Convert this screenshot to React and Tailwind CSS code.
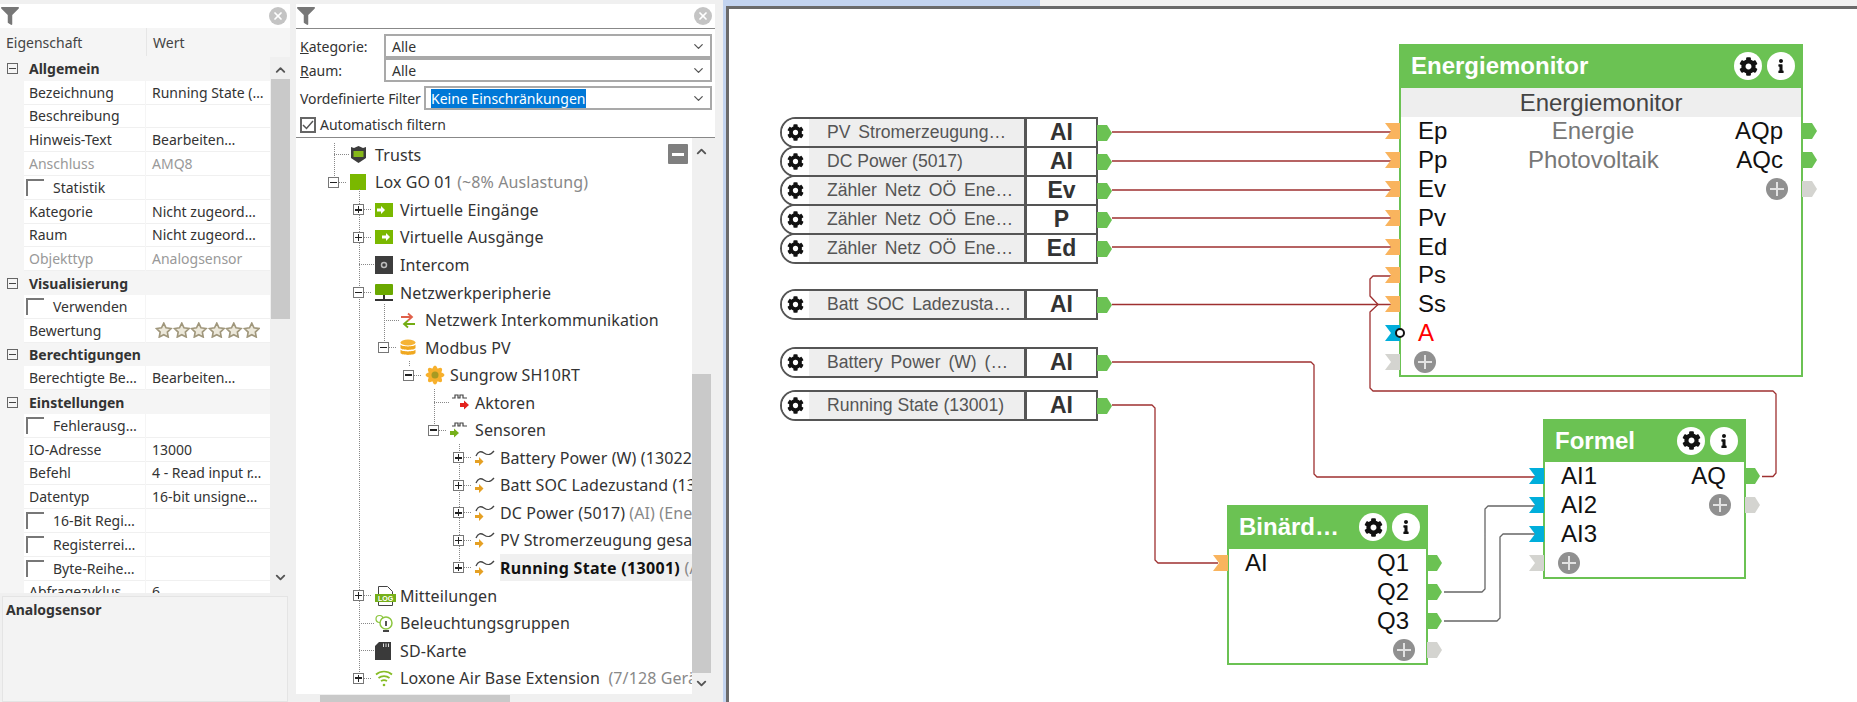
import React from 'react';
import { ChevronDown, ChevronUp, X } from 'lucide-react';
import { FaCog, FaFilter, FaInfo } from 'react-icons/fa';

const Star = () => (
  <svg width="17.500" height="16" viewBox="0 0 18 16" className="shrink-0">
    <path d="M9 1l2.300 4.800 5.200.7-3.800 3.600.9 5.100L9 12.800 4.400 15.200l.9-5.100L1.500 6.500l5.200-.7z" fill="#ece8da" stroke="#a0977c" strokeWidth="1.700" />
  </svg>
);

const propertyRows = [
  { group: 'Allgemein' },
  { name: 'Bezeichnung', value: 'Running State (…' },
  { name: 'Beschreibung' },
  { name: 'Hinweis-Text', value: 'Bearbeiten…' },
  { name: 'Anschluss', value: 'AMQ8', muted: true },
  { name: 'Statistik', check: true },
  { name: 'Kategorie', value: 'Nicht zugeord…' },
  { name: 'Raum', value: 'Nicht zugeord…' },
  { name: 'Objekttyp', value: 'Analogsensor', muted: true },
  { group: 'Visualisierung' },
  { name: 'Verwenden', check: true },
  { name: 'Bewertung', stars: true },
  { group: 'Berechtigungen' },
  { name: 'Berechtigte Be…', value: 'Bearbeiten…' },
  { group: 'Einstellungen' },
  { name: 'Fehlerausg…', check: true },
  { name: 'IO-Adresse', value: '13000' },
  { name: 'Befehl', value: '4 - Read input r…' },
  { name: 'Datentyp', value: '16-bit unsigne…' },
  { name: '16-Bit Regi…', check: true },
  { name: 'Registerrei…', check: true },
  { name: 'Byte-Reihe…', check: true },
  { name: 'Abfragezyklus', value: '6' },
];

const PropertyRow = ({ row }) => {
  if (row.group) {
    return (
      <div className="h-[23.800px] flex items-center bg-[#f5f5f5] shrink-0">
        <span className="ml-[7px] w-[11px] h-[11px] border border-[#666] flex items-center justify-center">
          <span className="w-[7px] h-px bg-[#444]" />
        </span>
        <span className="ml-[11px] font-bold text-[#333]">{row.group}</span>
      </div>
    );
  }
  const tone = row.muted ? 'text-[#999]' : 'text-[#333]';
  return (
    <div className="h-[23.800px] flex bg-[#f5f5f5] shrink-0">
      <div className="ml-[24px] w-[121px] bg-white border-b border-[#f0f0f0] flex items-center overflow-hidden whitespace-nowrap">
        {row.check ? (
          <>
            <span className="ml-[2px] w-[18px] h-[17px] border-l-2 border-t-2 border-[#777]" />
            <span className={`ml-[9px] ${tone}`}>{row.name}</span>
          </>
        ) : (
          <span className={`ml-[5px] ${tone}`}>{row.name}</span>
        )}
      </div>
      <div className="ml-px w-[124px] bg-white border-b border-[#f0f0f0] flex items-center overflow-hidden whitespace-nowrap">
        {row.stars ? (
          <span className="ml-[9px] flex">
            {[0, 1, 2, 3, 4, 5].map((i) => <Star key={i} />)}
          </span>
        ) : (
          <span className={`ml-[6px] ${tone}`}>{row.value}</span>
        )}
      </div>
    </div>
  );
};

const FilterBar = () => (
  <div className="h-[25px] bg-white border-b border-[#888] flex items-center justify-between pl-[1px] pr-[3px] shrink-0">
    <FaFilter size={18} color="#777" />
    <span className="w-[18px] h-[18px] rounded-full bg-[#c4c4c4] flex items-center justify-center">
      <X size={12} color="#fff" strokeWidth={3.500} />
    </span>
  </div>
);

const PropertyPanel = () => (
  <div className="w-[290px] shrink-0 pt-[4px] flex flex-col text-[14px] [font-family:'Noto_Sans',sans-serif]">
    <FilterBar />
    <div className="h-[29px] bg-[#f5f5f5] flex items-center text-[#444] -mt-px pb-[1px] shrink-0">
      <span className="w-[147px] pl-[6px] border-r border-[#e6e6e6] h-full flex items-center">Eigenschaft</span>
      <span className="pl-[6px]">Wert</span>
    </div>
    <div className="h-[536px] flex overflow-hidden shrink-0">
      <div className="w-[270px] flex flex-col overflow-hidden">
        {propertyRows.map((row) => <PropertyRow key={row.group || row.name} row={row} />)}
      </div>
      <div className="w-[20px] bg-[#f0f0f0] flex flex-col items-center">
        <ChevronUp size={15} strokeWidth={3} color="#555" className="mt-[4px] h-[18px]" />
        <div className="w-[19px] h-[240px] bg-[#c9c9c9]" />
        <div className="flex-1" />
        <ChevronDown size={15} strokeWidth={3} color="#555" className="mb-[8px]" />
      </div>
    </div>
    <div className="flex-1 mt-[3px] mx-[2px] bg-[#f3f3f3] border border-[#e4e4e4] px-[3px] pt-[2px]">
      <span className="font-bold text-[#333]">Analogsensor</span>
    </div>
  </div>
);

const TreeIcon = ({ type }) => {
  if (type === 'shield') return (
    <svg width="17" height="19" viewBox="0 0 17 19"><path d="M1 2l3 1 4.500-2 4.500 2 3-1v11l-7.500 5L1 13z" fill="#3c3c3c" /><rect x="3.500" y="6" width="10" height="6" fill="#86b81a" /></svg>
  );
  if (type === 'mini') return <span className="block w-[16px] h-[16px] bg-[#7ab800]" />;
  if (type === 'in' || type === 'out') return (
    <svg width="18" height="14" viewBox="0 0 18 14"><rect width="18" height="14" fill="#7ab800" /><path d={type === 'in' ? 'M2 5.500h4V3l4 4-4 4V8.500H2z' : 'M7 5.500h4V3l4 4-4 4V8.500H7z'} fill="#fff" /></svg>
  );
  if (type === 'intercom') return (
    <svg width="18" height="18" viewBox="0 0 18 18"><rect width="18" height="18" fill="#3d3d3d" /><circle cx="9" cy="9" r="2.500" fill="none" stroke="#bbb" strokeWidth="1.500" /></svg>
  );
  if (type === 'network') return (
    <svg width="18" height="18" viewBox="0 0 18 18"><rect y="0" width="18" height="11" rx="1" fill="#6aa800" /><rect x="8" y="11" width="2" height="4" fill="#333" /><rect y="15" width="18" height="2" fill="#333" /></svg>
  );
  if (type === 'arrows') return (
    <svg width="16" height="17" viewBox="0 0 16 17"><path d="M1 5h10M8 1.500L12 5 8 8.500" fill="none" stroke="#e0604a" strokeWidth="1.800" /><path d="M15 12H5M8 8.500L4 12l4 3.500" fill="none" stroke="#74ad14" strokeWidth="1.800" /></svg>
  );
  if (type === 'db') return (
    <svg width="16" height="17" viewBox="0 0 16 17"><ellipse cx="8" cy="3.500" rx="7.500" ry="3" fill="#f5b335" /><path d="M.5 5.500c1 2.500 14 2.500 15 0V9c-1 2.500-14 2.500-15 0zM.5 10.500c1 2.500 14 2.500 15 0V14c-1 2.500-14 2.500-15 0z" fill="#f0a820" /></svg>
  );
  if (type === 'sun') return (
    <svg width="20" height="20" viewBox="0 0 20 20">
      {[0, 45, 90, 135].map((a) => <ellipse key={a} cx="10" cy="10" rx="3.500" ry="9.500" fill="#f7b02c" transform={`rotate(${a} 10 10)`} />)}
      <circle cx="10" cy="10" r="3.500" fill="#a89a22" />
    </svg>
  );
  if (type === 'actor' || type === 'sensor') return (
    <svg width="19" height="17" viewBox="0 0 19 17">
      <path d="M2 4h3V1h3v3h2V1h3v3h4" fill="none" stroke="#444" strokeWidth="1.200" />
      {type === 'actor'
        ? <path d="M10 9h4V6.500l5 4.500-5 4.500V13h-4z" fill="#e3211c" />
        : <path d="M0 9h4V6.500l5 4.500-5 4.500V13H0z" fill="#76b01a" />}
    </svg>
  );
  if (type === 'wave') return (
    <svg width="20" height="18" viewBox="0 0 20 18">
      <path d="M1 7c2-5 5-5 8-3s6 3 10-2" fill="none" stroke="#444" strokeWidth="1.300" />
      <path d="M0 11h4V8l4.500 4.500L4 17v-3H0z" fill="#e5a024" />
    </svg>
  );
  if (type === 'log') return (
    <svg width="21" height="20" viewBox="0 0 21 20">
      <path d="M3.500.5h9l5 5v14h-14z" fill="#fff" stroke="#444" />
      <rect y="8" width="21" height="8" fill="#76b01a" />
      <text x="10.500" y="14.500" textAnchor="middle" fontSize="7" fontWeight="700" fill="#fff" fontFamily="Liberation Sans">LOG</text>
    </svg>
  );
  if (type === 'light') return (
    <svg width="19" height="19" viewBox="0 0 19 19">
      <circle cx="4.500" cy="5" r="3.500" fill="none" stroke="#8cc63f" strokeWidth="1.200" />
      <circle cx="11" cy="9" r="6" fill="#fff" stroke="#8cc63f" strokeWidth="1.500" />
      <rect x="8" y="16" width="6" height="2" fill="#444" />
      <rect x="10" y="7" width="2" height="5" fill="#555" />
    </svg>
  );
  if (type === 'sd') return (
    <svg width="16" height="18" viewBox="0 0 16 18"><path d="M4 0h12v18H0V4z" fill="#3a3a3a" /><path d="M8 1.500h1V5H8zM10.500 1.500h1V5h-1zM13 1.500h1V5h-1z" fill="#ddd" /></svg>
  );
  if (type === 'wifi') return (
    <svg width="18" height="18" viewBox="0 0 18 18" fill="none" stroke="#86bc25" strokeWidth="1.700">
      <path d="M1 5.500c4.500-4 11.500-4 16 0M3.500 9c3-2.500 8-2.500 11 0M6 12c2-1.300 4-1.300 6 0" />
      <circle cx="9" cy="16" r="1.300" fill="#86bc25" stroke="none" />
    </svg>
  );
  return null;
};

const treeIndent = ['pl-[29px]', 'pl-[54px]', 'pl-[79px]', 'pl-[104px]', 'pl-[129px]', 'pl-[154px]'];

const treeRows = [
  { level: 0, icon: 'shield', text: 'Trusts' },
  { level: 0, icon: 'mini', text: 'Lox GO 01', note: ' (~8% Auslastung)', box: '-' },
  { level: 1, icon: 'in', text: 'Virtuelle Eingänge', box: '+' },
  { level: 1, icon: 'out', text: 'Virtuelle Ausgänge', box: '+' },
  { level: 1, icon: 'intercom', text: 'Intercom' },
  { level: 1, icon: 'network', text: 'Netzwerkperipherie', box: '-' },
  { level: 2, icon: 'arrows', text: 'Netzwerk Interkommunikation' },
  { level: 2, icon: 'db', text: 'Modbus PV', box: '-' },
  { level: 3, icon: 'sun', text: 'Sungrow SH10RT', box: '-' },
  { level: 4, icon: 'actor', text: 'Aktoren' },
  { level: 4, icon: 'sensor', text: 'Sensoren', box: '-' },
  { level: 5, icon: 'wave', text: 'Battery Power (W) (13022) (AI)', box: '+' },
  { level: 5, icon: 'wave', text: 'Batt SOC Ladezustand (13022) (AI)', box: '+' },
  { level: 5, icon: 'wave', text: 'DC Power (5017)', note: ' (AI) (Energiemonitor)', box: '+' },
  { level: 5, icon: 'wave', text: 'PV Stromerzeugung gesamt (5017)', box: '+' },
  { level: 5, icon: 'wave', text: 'Running State (13001)', note: ' (AI)', box: '+', selected: true },
  { level: 1, icon: 'log', text: 'Mitteilungen', box: '+' },
  { level: 1, icon: 'light', text: 'Beleuchtungsgruppen' },
  { level: 1, icon: 'sd', text: 'SD-Karte' },
  { level: 1, icon: 'wifi', text: 'Loxone Air Base Extension', note: '  (7/128 Geräte)', box: '+' },
];

const TreeRow = ({ row }) => (
  <div className={`h-[27.550px] shrink-0 flex items-center whitespace-nowrap ${treeIndent[row.level]}`}>
    <span className="w-[25px] shrink-0 flex items-center">
      {row.box ? (
        <>
          <span className="ml-[3px] w-[11px] h-[11px] border border-[#777] bg-white flex items-center justify-center text-[13px] leading-none relative">
            <span className="w-[7px] h-[1.500px] bg-[#222]" />
            {row.box === '+' && <span className="absolute w-[1.500px] h-[7px] bg-[#222]" />}
          </span>
          <span className="w-[7px] border-t border-dotted border-[#888]" />
        </>
      ) : (
        <span className="ml-[9px] w-[15px] border-t border-dotted border-[#888]" />
      )}
    </span>
    <span className="w-[25px] shrink-0 flex items-center"><TreeIcon type={row.icon} /></span>
    <span className={row.selected ? 'flex-1 bg-[#f0f0f0] font-bold text-[#111] h-[27px] flex items-center tracking-[0.300px] whitespace-pre' : 'text-[#333] tracking-[0.100px]'}>
      {row.text}
      {row.note && <span className="text-[#888] font-normal whitespace-pre">{row.note}</span>}
    </span>
  </div>
);

const ComboBox = ({ children, className }) => (
  <div className={`h-[24px] border-2 border-[#a9a9a9] bg-white flex items-center justify-between pr-[4px] ${className}`}>
    {children}
    <ChevronDown size={15} color="#555" />
  </div>
);

const TreePanel = () => (
  <div className="w-[419px] shrink-0 pt-[4px] flex flex-col text-[14px] [font-family:'Noto_Sans',sans-serif]">
    <FilterBar />
    <div className="bg-white h-[109px] border-b border-[#888] pt-[5px] pl-[4px] pr-[3px] text-[#333]">
      <div className="flex items-center">
        <span className="w-[84px]"><u>K</u>ategorie:</span>
        <ComboBox className="flex-1 pl-[6px]">Alle</ComboBox>
      </div>
      <div className="flex items-center">
        <span className="w-[84px]"><u>R</u>aum:</span>
        <ComboBox className="flex-1 pl-[6px]">Alle</ComboBox>
      </div>
      <div className="flex items-center mt-[4px]">
        <span className="w-[124px] tracking-[-0.100px]">Vordefinierte Filter</span>
        <ComboBox className="flex-1 pl-[5px]">
          <span className="bg-[#0078d7] text-white h-[19px] leading-[19px] w-[155px]">Keine Einschränkungen</span>
        </ComboBox>
      </div>
      <div className="flex items-center mt-[4px]">
        <span className="w-[16px] h-[16px] border-2 border-[#666] flex items-center justify-center">
          <svg width="12" height="10" viewBox="0 0 12 10"><path d="M1 5l3.500 3.500L11 1" fill="none" stroke="#555" strokeWidth="1.500" /></svg>
        </span>
        <span className="ml-[4px]">Automatisch filtern</span>
      </div>
    </div>
    <div className="flex-1 flex overflow-hidden">
      <div className="w-[396px] h-[556px] bg-white relative overflow-hidden pt-[3px] flex flex-col text-[16px]">
        <svg className="absolute left-0 top-0 w-full h-full pointer-events-none" viewBox="296 139 396 556" fill="none" stroke="#888" strokeDasharray="1 1">
          <path d="M334.500 144V177M359.500 190V679M384.500 305V345M409.500 362V368M434.500 390V425M459.500 445V569" />
        </svg>
        {treeRows.map((row) => <TreeRow key={row.text} row={row} />)}
        <span className="absolute left-[372px] top-[6px] w-[20px] h-[20px] bg-[#7f7f7f] rounded-[1px] flex items-center justify-center">
          <span className="w-[12px] h-[3px] bg-white" />
        </span>
      </div>
      <div className="w-[23px] h-[556px] bg-[#f0f0f0] flex flex-col items-center">
        <ChevronUp size={15} strokeWidth={3} color="#555" className="mt-[6px] mr-[4px]" />
        <div className="flex-1 flex flex-col justify-end w-full">
          <div className="w-[19px] h-[299px] bg-[#c9c9c9]" />
        </div>
        <ChevronDown size={15} strokeWidth={3} color="#555" className="mt-[3px] mb-[3px] mr-[4px]" />
      </div>
    </div>
    <div className="h-[7px] bg-[#f0f0f0] pl-[24px]">
      <div className="w-[190px] h-full bg-[#c9c9c9]" />
    </div>
  </div>
);

const Gear = () => (
  <span className="w-[28px] h-[28px] rounded-full bg-white flex items-center justify-center">
    <FaCog size={19} color="#111" />
  </span>
);

const Info = () => (
  <span className="w-[28px] h-[28px] rounded-full bg-white flex items-center justify-center">
    <FaInfo size={14} color="#111" />
  </span>
);

// className has to bring the positioning: absolute for the right column, ml for the left one
const PlusBtn = ({ className }) => (
  <span className={`w-[22px] h-[22px] rounded-full bg-[#909090] flex items-center justify-center ${className}`}>
    <svg width="14" height="14" viewBox="0 0 14 14"><path d="M0 7h14M7 0v14" stroke="#e2e2e2" strokeWidth="2" /></svg>
  </span>
);

const InPin = ({ color }) => (
  <svg width="15" height="16" viewBox="0 0 15 16" className="absolute -left-[16px] top-1/2 -translate-y-1/2">
    <path d="M0 0h15v16H0l6-8z" fill={color} />
  </svg>
);

const OutPin = ({ color }) => (
  <svg width="15" height="16" viewBox="0 0 15 16" className="absolute -right-[16px] top-1/2 -translate-y-1/2">
    <path d="M0 0h10l5 8-5 8H0z" fill={color} />
  </svg>
);

const ORANGE = '#f9b45e';
const BLUE = '#00aedb';
const IDLE = '#d4d4d0';
const GREEN = '#6bc253';

const SourceRow = ({ label, pin, spaced }) => (
  <div className="h-[31px] -mt-[2px] first:mt-0 flex border-2 border-[#555] rounded-l-[16px] relative">
    <span className="w-[27px] shrink-0 flex items-center justify-center bg-white rounded-l-[14px]">
      <FaCog size={17} color="#111" />
    </span>
    <span className={`flex-1 bg-[#eeeeee] pl-[18px] flex items-center text-[17.600px] text-[#555] whitespace-nowrap overflow-hidden ${spaced ? '[word-spacing:3px]' : ''}`}>{label}</span>
    <span className="w-[72px] shrink-0 border-l-[3px] border-[#555] bg-white flex items-center justify-center text-[23px] font-bold text-[#333]">{pin}</span>
    <OutPin color={GREEN} />
  </div>
);

const BlockHeader = ({ title, height = 'h-[44px]' }) => (
  <div className={`${height} bg-[#6bc253] flex items-center justify-between pl-[12px] pr-[8px] shrink-0`}>
    <span className="text-[24px] font-bold text-white whitespace-nowrap">{title}</span>
    <span className="flex gap-[5px]">
      <Gear />
      <Info />
    </span>
  </div>
);

const PinRow = ({ children, left, right }) => (
  <div className="h-[28.800px] shrink-0 relative flex items-center">
    {left && <InPin color={left} />}
    {right && <OutPin color={right} />}
    {children}
  </div>
);

const Canvas = () => (
  <div className="flex-1 flex flex-col">
    <div className="h-[6px] flex">
      <div className="w-[314px] bg-[#c3d4f0]" />
      <div className="flex-1 bg-[#f2f2f2]" />
    </div>
    <div className="flex-1 bg-white border-t-[3px] border-l-[3px] border-[#6b6b6b] relative overflow-hidden text-[24px] text-[#111] [font-family:'Liberation_Sans',sans-serif]">
      <svg className="absolute inset-0 w-full h-full" viewBox="729 9 1128 693" fill="none" strokeWidth="1.300" stroke="#9e3030" strokeLinejoin="round">
        <path d="M1112 132H1392M1112 161H1392M1112 190H1392M1112 218H1392M1112 247H1392M1112 304.500H1392" />
        <path d="M1392 276H1373L1370 279V296L1378 304.500L1370 312V388L1373 391H1773L1776 394V473L1773 476.500H1762" />
        <path d="M1112 362H1311L1314 365V474L1317 477H1537" />
        <path d="M1112 405H1152L1155 408V560L1158 563H1218" />
        <path d="M1444 592H1482L1485 589V509L1488 506H1537M1444 621H1497L1500 618V537L1503 534H1537" stroke="#666" />
      </svg>

      <div className="absolute left-[51px] top-[108px] w-[318px] flex flex-col">
        <SourceRow label="PV  Stromerzeugung…" pin="AI" spaced />
        <SourceRow label="DC Power (5017)" pin="AI" />
        <SourceRow label="Zähler Netz OÖ Ene…" pin="Ev" spaced />
        <SourceRow label="Zähler Netz OÖ Ene…" pin="P" spaced />
        <SourceRow label="Zähler Netz OÖ Ene…" pin="Ed" spaced />
      </div>
      <div className="absolute left-[51px] top-[280px] w-[318px]">
        <SourceRow label="Batt SOC Ladezusta…" pin="AI" spaced />
      </div>
      <div className="absolute left-[51px] top-[338px] w-[318px]">
        <SourceRow label="Battery Power (W) (…" pin="AI" spaced />
      </div>
      <div className="absolute left-[51px] top-[381px] w-[318px]">
        <SourceRow label="Running State (13001)" pin="AI" />
      </div>

      <div className="absolute left-[670px] top-[35px] w-[404px] h-[333px] border-2 border-[#6bc253] flex flex-col bg-white">
        <div className="-mx-[2px] -mt-[2px]"><BlockHeader title="Energiemonitor" /></div>
        <div className="h-[29px] bg-[#eeeeee] text-center leading-[29px] text-[#444] shrink-0">Energiemonitor</div>
        <PinRow left={ORANGE} right={GREEN}>
          <span className="ml-[17px]">Ep</span>
          <span className="absolute left-[127px] w-[130px] text-center text-[#777]">Energie</span>
          <span className="absolute right-[18px]">AQp</span>
        </PinRow>
        <PinRow left={ORANGE} right={GREEN}>
          <span className="ml-[17px]">Pp</span>
          <span className="absolute left-[127px] w-[130px] text-center text-[#777]">Photovoltaik</span>
          <span className="absolute right-[18px]">AQc</span>
        </PinRow>
        <PinRow left={ORANGE} right={IDLE}>
          <span className="ml-[17px]">Ev</span>
          <PlusBtn className="absolute right-[13px]" />
        </PinRow>
        <PinRow left={ORANGE}><span className="ml-[17px]">Pv</span></PinRow>
        <PinRow left={ORANGE}><span className="ml-[17px]">Ed</span></PinRow>
        <PinRow left={ORANGE}><span className="ml-[17px]">Ps</span></PinRow>
        <PinRow left={ORANGE}><span className="ml-[17px]">Ss</span></PinRow>
        <PinRow left={BLUE}>
          <span className="absolute -left-[6px] w-[10px] h-[10px] rounded-full bg-white border-2 border-[#111]" />
          <span className="ml-[17px] text-[#f00]">A</span>
        </PinRow>
        <PinRow left={IDLE}><PlusBtn className="ml-[13px]" /></PinRow>
      </div>

      <div className="absolute left-[814px] top-[410px] w-[203px] h-[160px] border-2 border-[#6bc253] flex flex-col bg-white">
        <div className="-mx-[2px] -mt-[2px]"><BlockHeader title="Formel" height="h-[43px]" /></div>
        <PinRow left={BLUE} right={GREEN}>
          <span className="ml-[16px]">AI1</span>
          <span className="absolute right-[18px]">AQ</span>
        </PinRow>
        <PinRow left={BLUE} right={IDLE}>
          <span className="ml-[16px]">AI2</span>
          <PlusBtn className="absolute right-[13px]" />
        </PinRow>
        <PinRow left={BLUE}><span className="ml-[16px]">AI3</span></PinRow>
        <PinRow left={IDLE}><PlusBtn className="ml-[13px]" /></PinRow>
      </div>

      <div className="absolute left-[498px] top-[496px] w-[201px] h-[160px] border-2 border-[#6bc253] flex flex-col bg-white">
        <div className="-mx-[2px] -mt-[2px]"><BlockHeader title="Binärd…" /></div>
        <PinRow left={ORANGE} right={GREEN}>
          <span className="ml-[16px]">AI</span>
          <span className="absolute right-[17px]">Q1</span>
        </PinRow>
        <PinRow right={GREEN}><span className="absolute right-[17px]">Q2</span></PinRow>
        <PinRow right={GREEN}><span className="absolute right-[17px]">Q3</span></PinRow>
        <PinRow right={IDLE}><PlusBtn className="absolute right-[11px]" /></PinRow>
      </div>
    </div>
  </div>
);

export default function App() {
  return (
    <div className="w-[1857px] h-[702px] overflow-hidden bg-[#f0f0f0] flex">
      <PropertyPanel />
      <div className="w-[6px] shrink-0" />
      <TreePanel />
      <div className="w-[8px] shrink-0" />
      <div className="w-[3px] shrink-0 bg-[#c3d4f0]" />
      <Canvas />
    </div>
  );
}
